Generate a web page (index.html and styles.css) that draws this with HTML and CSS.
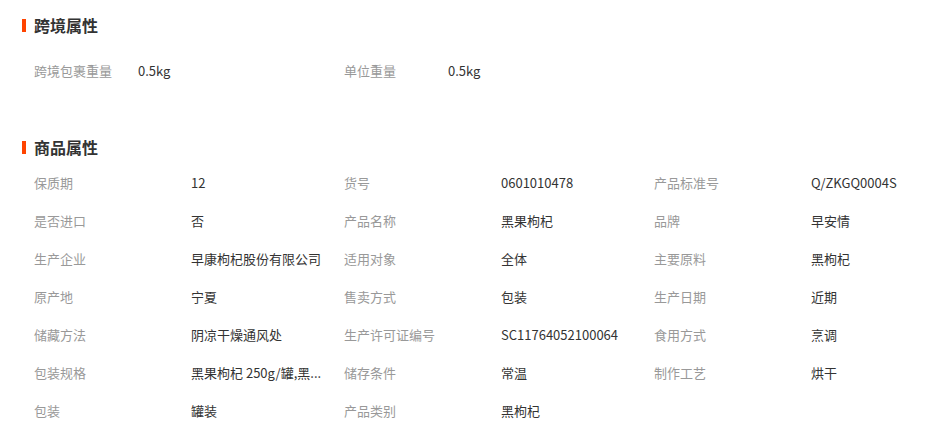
FILE: index.html
```html
<!DOCTYPE html>
<html lang="zh-CN">

<head>
    <meta charset="UTF-8">
    <meta name="viewport" content="width=device-width, initial-scale=1.0">
    <title>商品属性</title>
    <link rel="stylesheet" href="styles.css">
</head>
<body>
<div class="attrs">
    <section class="attr-section cross">
        <h3 class="attr-title">跨境属性</h3>
        <ul class="attr-list">
            <li><span class="attr-name">跨境包裹重量</span><span class="attr-value">0.5kg</span></li>
            <li><span class="attr-name">单位重量</span><span class="attr-value">0.5kg</span></li>
        </ul>
    </section>

    <section class="attr-section goods">
        <h3 class="attr-title">商品属性</h3>
        <ul class="attr-list">
            <li><span class="attr-name">保质期</span><span class="attr-value">12</span></li>
            <li><span class="attr-name">货号</span><span class="attr-value">0601010478</span></li>
            <li><span class="attr-name">产品标准号</span><span class="attr-value">Q/ZKGQ0004S</span></li>
            <li><span class="attr-name">是否进口</span><span class="attr-value">否</span></li>
            <li><span class="attr-name">产品名称</span><span class="attr-value">黑果枸杞</span></li>
            <li><span class="attr-name">品牌</span><span class="attr-value">早安情</span></li>
            <li><span class="attr-name">生产企业</span><span class="attr-value">早康枸杞股份有限公司</span></li>
            <li><span class="attr-name">适用对象</span><span class="attr-value">全体</span></li>
            <li><span class="attr-name">主要原料</span><span class="attr-value">黑枸杞</span></li>
            <li><span class="attr-name">原产地</span><span class="attr-value">宁夏</span></li>
            <li><span class="attr-name">售卖方式</span><span class="attr-value">包装</span></li>
            <li><span class="attr-name">生产日期</span><span class="attr-value">近期</span></li>
            <li><span class="attr-name">储藏方法</span><span class="attr-value">阴凉干燥通风处</span></li>
            <li><span class="attr-name">生产许可证编号</span><span class="attr-value">SC11764052100064</span></li>
            <li><span class="attr-name">食用方式</span><span class="attr-value">烹调</span></li>
            <li><span class="attr-name">包装规格</span><span class="attr-value" title="黑果枸杞 250g/罐,黑果枸杞 500g/罐">黑果枸杞 250g/罐,黑...</span></li>
            <li><span class="attr-name">储存条件</span><span class="attr-value">常温</span></li>
            <li><span class="attr-name">制作工艺</span><span class="attr-value">烘干</span></li>
            <li><span class="attr-name">包装</span><span class="attr-value">罐装</span></li>
            <li><span class="attr-name">产品类别</span><span class="attr-value">黑枸杞</span></li>
        </ul>
    </section>
</div>
</body>
</html>
```

FILE: styles.css
```css
body {
    margin: 0;
    font-family: "Noto Sans CJK SC", "Liberation Sans", sans-serif;
    font-size: 13px;
    color: #333;
    background: #fff;
}

.attrs {
    padding: 15px 0 0 22px;
}

.attr-title {
    margin: 0;
    height: 20px;
    line-height: 20px;
    font-size: 16px;
    font-weight: bold;
    color: #333;
    display: flex;
    align-items: center;
}

.attr-title::before {
    content: "";
    width: 4px;
    height: 13px;
    margin-right: 8px;
    background: #ff4400;
}

.attr-list {
    list-style: none;
    margin: 0;
    padding: 0 0 0 12px;
    display: grid;
    grid-template-columns: repeat(3, 310px);
}

.attr-list li {
    display: flex;
    height: 38px;
    line-height: 38px;
}

.attr-name {
    color: #999;
    flex: 0 0 157px;
}

.attr-value {
    color: #333;
    white-space: nowrap;
}

.cross .attr-list {
    margin-top: 17px;
}

.cross .attr-name {
    flex-basis: 104px;
}

.goods {
    margin-top: 47px;
}

.goods .attr-list {
    margin-top: 7px;
}
```
